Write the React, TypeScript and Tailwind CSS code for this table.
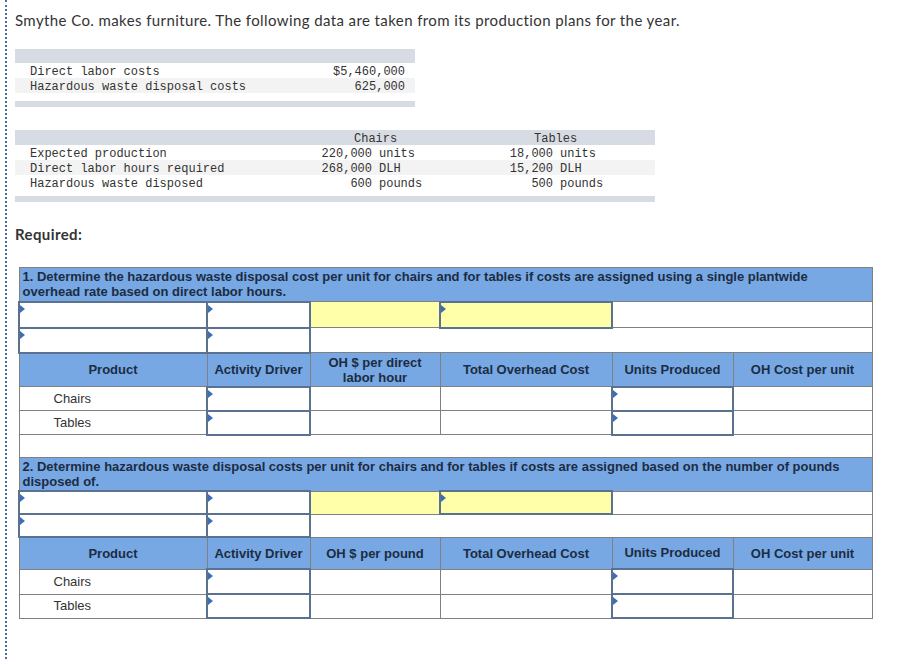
import React from "react";

const MONO = "font-['Liberation_Mono',monospace]";
const SANS = "font-['Liberation_Sans',Arial,sans-serif]";

const GRID = "border-[#808080]";
const HEAD_BG = "bg-[#77a8e4]";
const INPUT = "relative border-2 border-[#5a718f] p-0";

function Marker() {
  return (
    <span className="absolute left-0 top-[2px] h-0 w-0 border-y-[4px] border-l-[5px] border-y-transparent border-l-[#3d6eb4]" />
  );
}

function InputCell({ yellow = false }: { yellow?: boolean }) {
  return (
    <td className={`${INPUT} ${yellow ? "bg-[#ffffaa]" : "bg-white"}`}>
      <Marker />
    </td>
  );
}

function HeaderRow({ rate, h }: { rate: React.ReactNode; h: string }) {
  const th = `border ${GRID} ${HEAD_BG} text-center font-bold text-[13px] leading-[15px] text-[#1c2c42]`;
  return (
    <tr className={h}>
      <td className={th}>Product</td>
      <td className={th}>Activity Driver</td>
      <td className={th}>{rate}</td>
      <td className={th}>Total Overhead Cost</td>
      <td className={th}>Units Produced</td>
      <td className={th}>OH Cost per unit</td>
    </tr>
  );
}

function ProductRow({ name, h }: { name: string; h: string }) {
  const td = `border ${GRID} bg-white`;
  return (
    <tr className={h}>
      <td className={`${td} pl-[34px] text-[13px] text-[#333]`}>{name}</td>
      <InputCell />
      <td className={td} />
      <td className={td} />
      <InputCell />
      <td className={td} />
    </tr>
  );
}

function InputRows({ h1, h2 }: { h1: string; h2: string }) {
  return (
    <>
      <tr className={h1}>
        <InputCell />
        <InputCell />
        <td className={`border-y ${GRID} bg-[#ffffaa]`} />
        <InputCell yellow />
        <td colSpan={2} className={`border-y ${GRID} bg-white`} />
      </tr>
      <tr className={h2}>
        <InputCell />
        <InputCell />
        <td colSpan={4} className={`border-y ${GRID} bg-white`} />
      </tr>
    </>
  );
}

function Question({ text, h }: { text: string; h: string }) {
  return (
    <tr className={h}>
      <td
        colSpan={6}
        className={`border ${GRID} ${HEAD_BG} px-[3px] py-[1px] text-left align-top font-bold text-[13px] leading-[15px] text-[#1c2c42]`}
      >
        {text}
      </td>
    </tr>
  );
}

export default function App() {
  return (
    <div className="min-h-[659px] bg-white pl-[5px]">
      <div className="min-h-[659px] border-l-2 border-dotted border-[#4a6fa8] pl-[8px] pt-[10px]">
        <p className="font-['Lato',sans-serif] text-[15px] leading-[20px] tracking-[0.4px] text-[#333]">
          Smythe Co. makes furniture. The following data are taken from its production plans for the year.
        </p>

        {/* cost data */}
        <div className={`${MONO} mt-[19px] w-[400px] text-[12px] leading-[15px] text-[#333]`}>
          <div className="h-[14px] bg-[#d7dce4]" />
          <div className="flex h-[15px] justify-between pl-[15px] pr-[10px] pt-[2px]">
            <span>Direct labor costs</span>
            <span>$5,460,000</span>
          </div>
          <div className="flex h-[15px] justify-between bg-[#f3f3f3] pl-[15px] pr-[10px] pt-[2px]">
            <span>Hazardous waste disposal costs</span>
            <span>625,000</span>
          </div>
          <div className="h-[8px]" />
          <div className="h-[6px] bg-[#d7dce4]" />
        </div>

        {/* production data */}
        <div className={`${MONO} mt-[23px] w-[640px] text-[12px] leading-[15px] text-[#333]`}>
          <div className="grid h-[15px] grid-cols-[285px_180px_175px] bg-[#d7dce4] pt-[2px]">
            <span />
            <span className="pl-[54px]">Chairs</span>
            <span className="pl-[54px]">Tables</span>
          </div>
          {[
            ["Expected production", "220,000", "units", "18,000", "units", ""],
            ["Direct labor hours required", "268,000", "DLH", "15,200", "DLH", "bg-[#f3f3f3]"],
            ["Hazardous waste disposed", "600", "pounds", "500", "pounds", ""],
          ].map((r) => (
            <div key={r[0]} className={`grid h-[15px] grid-cols-[285px_72px_108px_73px_102px] pt-[2px] ${r[5]}`}>
              <span className="pl-[15px]">{r[0]}</span>
              <span className="text-right">{r[1]}</span>
              <span className="pl-[7px]">{r[2]}</span>
              <span className="text-right">{r[3]}</span>
              <span className="pl-[7px]">{r[4]}</span>
            </div>
          ))}
          <div className="h-[6px]" />
          <div className="h-[6px] bg-[#d7dce4]" />
        </div>

        <p className="mt-[22px] font-['Lato',sans-serif] text-[15px] font-bold leading-[20px] tracking-[0.4px] text-[#333]">
          Required:
        </p>

        <table className={`${SANS} ml-[3px] mt-[23px] w-[853px] table-fixed border-collapse border ${GRID}`}>
          <colgroup>
            <col className="w-[188px]" />
            <col className="w-[103px]" />
            <col className="w-[130px]" />
            <col className="w-[172px]" />
            <col className="w-[121px]" />
            <col className="w-[139px]" />
          </colgroup>
          <tbody>
            <Question
              h="h-[34px]"
              text="1. Determine the hazardous waste disposal cost per unit for chairs and for tables if costs are assigned using a single plantwide overhead rate based on direct labor hours."
            />
            <InputRows h1="h-[26px]" h2="h-[25px]" />
            <HeaderRow
              h="h-[34px]"
              rate={
                <>
                  OH $ per direct
                  <br />
                  labor hour
                </>
              }
            />
            <ProductRow name="Chairs" h="h-[24px]" />
            <ProductRow name="Tables" h="h-[24px]" />
            <tr className="h-[23px]">
              <td colSpan={6} className={`border-y ${GRID} bg-white`} />
            </tr>
            <Question
              h="h-[33px]"
              text="2. Determine hazardous waste disposal costs per unit for chairs and for tables if costs are assigned based on the number of pounds disposed of."
            />
            <InputRows h1="h-[23px]" h2="h-[23px]" />
            <HeaderRow h="h-[32px]" rate="OH $ per pound" />
            <ProductRow name="Chairs" h="h-[25px]" />
            <ProductRow name="Tables" h="h-[24px]" />
          </tbody>
        </table>
      </div>
    </div>
  );
}
